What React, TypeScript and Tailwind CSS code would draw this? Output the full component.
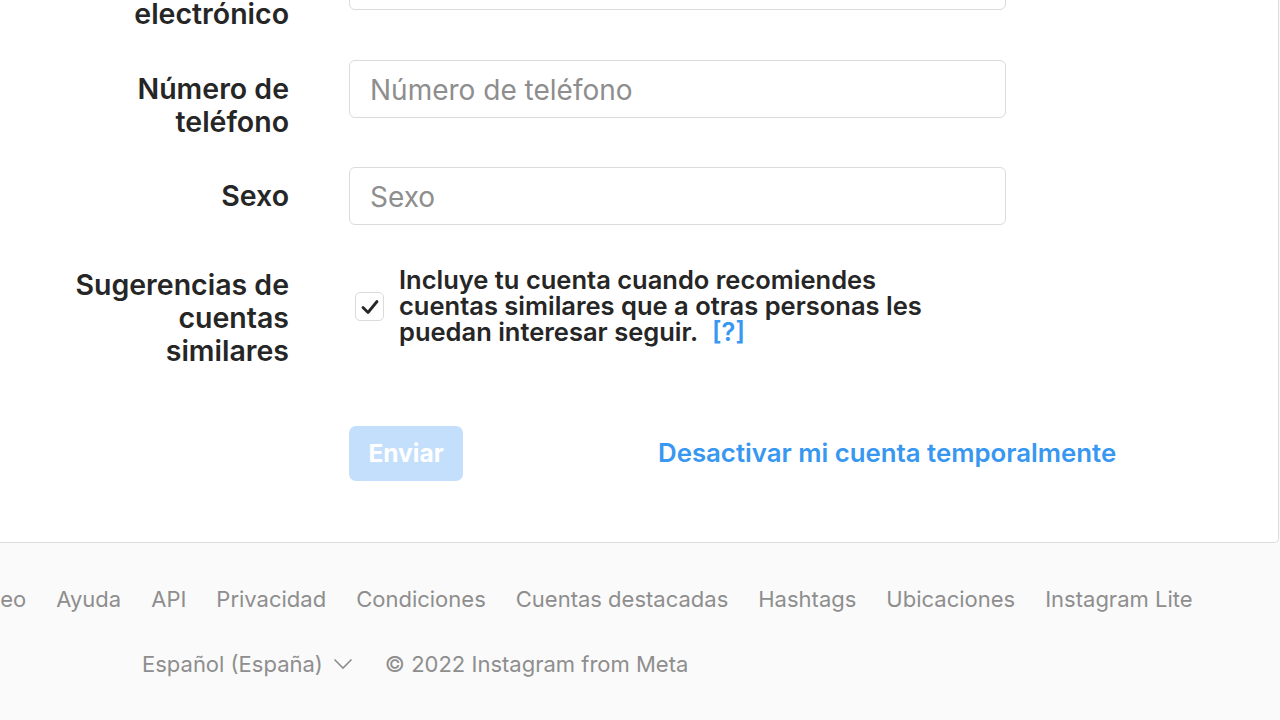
import React from "react";

const font = { fontFamily: "Inter, 'Noto Sans', sans-serif" };

function Label({ children }: { children: React.ReactNode }) {
  return (
    <div className="w-[289px] shrink-0 pl-[64px] text-right text-[28.5px] leading-[33px] font-semibold text-[#262626]">
      {children}
    </div>
  );
}

function InputRow({ label, placeholder, className }: { label: React.ReactNode; placeholder: string; className?: string }) {
  return (
    <div className={"flex items-start " + (className ?? "")}>
      <div className="pt-[12px]">
        <Label>{label}</Label>
      </div>
      <div className="ml-[60px] flex h-[58px] w-[657px] shrink-0 items-center rounded-[6px] border border-[#dbdbdb] bg-white px-[20px] pt-[2px] text-[28px] text-[#8e8e8e]">
        {placeholder}
      </div>
    </div>
  );
}

export default function App() {
  const links = ["Empleo", "Ayuda", "API", "Privacidad", "Condiciones", "Cuentas destacadas", "Hashtags", "Ubicaciones", "Instagram Lite"];
  return (
    <div className="flex h-[720px] w-[1280px] flex-col overflow-hidden bg-[#fafafa]" style={font}>
      <div className="mr-px h-[543px] shrink-0 overflow-hidden rounded-br-[5px] border-r border-b border-[#dbdbdb] bg-white">
        <div className="-mt-[48px] flex flex-col">
          <InputRow label={<>Correo<br />electrónico</>} placeholder="Correo electrónico" />
          <InputRow className="mt-[30px]" label="Número de teléfono" placeholder="Número de teléfono" />
          <InputRow className="mt-[29px]" label="Sexo" placeholder="Sexo" />
          <div className="mt-[43px] flex items-start">
            <Label>Sugerencias de cuentas similares</Label>
            <div className="ml-[60px] flex w-[657px] shrink-0 items-start">
              <div className="mt-[24px] ml-[6px] flex h-[29px] w-[29px] shrink-0 items-center justify-center rounded-[5px] border border-[#dbdbdb]">
                <svg width="20" height="20" viewBox="0 0 20 20" fill="none">
                  <path d="M3 10.5 L8 15.5 L17 4.5" stroke="#262626" strokeWidth="2.8" strokeLinecap="round" strokeLinejoin="round" />
                </svg>
              </div>
              <div className="mt-[-1.5px] ml-[15px] w-[550px] text-[25.5px] leading-[26px] font-semibold text-[#262626]">
                Incluye tu cuenta cuando recomiendes cuentas similares que a otras personas les puedan interesar seguir.{" "}
                <span className="ml-[8px] text-[#3897f0]">[?]</span>
              </div>
            </div>
          </div>
          <div className="mt-[59px] flex items-center">
            <div className="w-[289px] shrink-0" />
            <div className="ml-[60px] flex w-[900px] shrink-0 items-center">
              <button className="flex h-[55px] w-[114px] shrink-0 items-center justify-center rounded-[7px] bg-[#c4dffb] text-[24.5px] font-bold text-white">
                Enviar
              </button>
              <span className="ml-[195px] whitespace-nowrap text-[25.8px] font-semibold text-[#3897f0]">Desactivar mi cuenta temporalmente</span>
            </div>
          </div>
        </div>
      </div>
      <div className="flex flex-col">
        <div className="mt-[41px] -ml-[51px] flex gap-[30px] whitespace-nowrap text-[22px] leading-[30px] text-[#8e8e8e]">
          {links.map((l) => (
            <span key={l}>{l}</span>
          ))}
        </div>
        <div className="mt-[35px] ml-[142px] flex items-center whitespace-nowrap text-[22px] leading-[30px] text-[#8e8e8e]">
          <span>Español (España)</span>
          <svg className="ml-[10px]" width="20" height="12" viewBox="0 0 20 12" fill="none">
            <path d="M1.5 1.5 L10 10 L18.5 1.5" stroke="#8e8e8e" strokeWidth="1.6" />
          </svg>
          <span className="ml-[32px]">© 2022 Instagram from Meta</span>
        </div>
      </div>
    </div>
  );
}
